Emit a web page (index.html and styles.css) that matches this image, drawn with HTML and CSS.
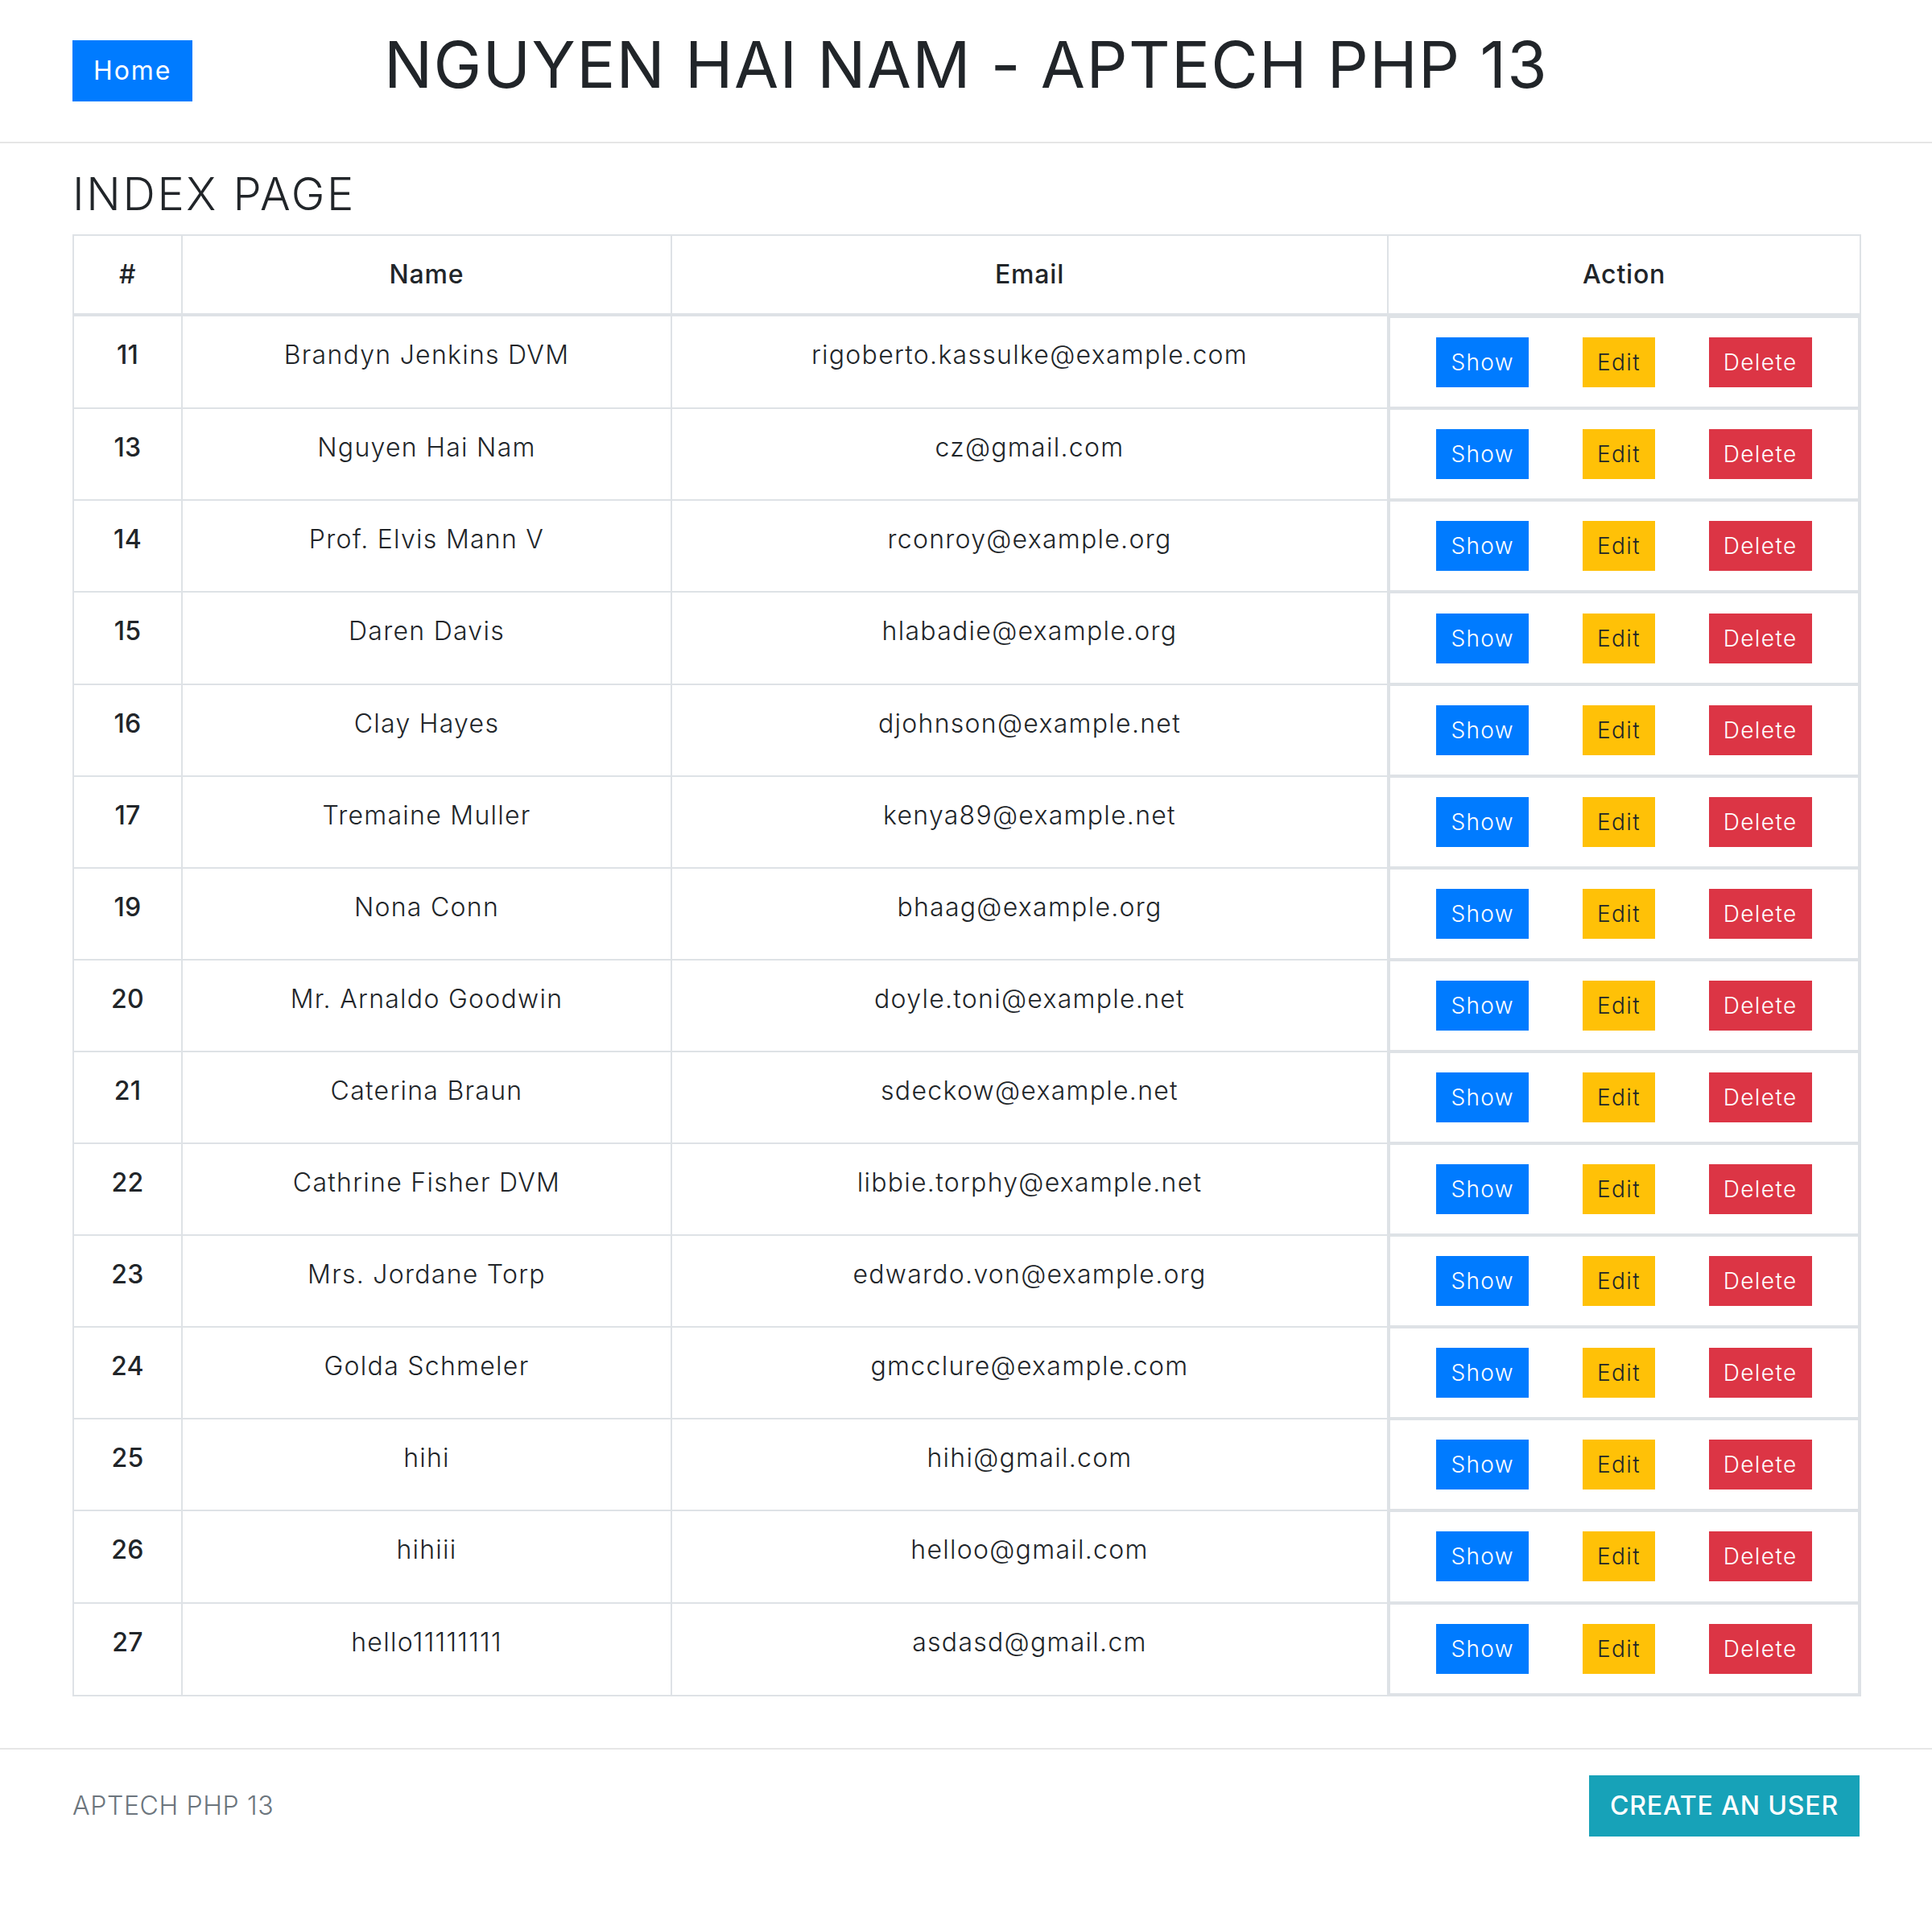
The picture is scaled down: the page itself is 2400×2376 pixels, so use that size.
FILE: index.html
```html
<!DOCTYPE html>
<html lang="en">
<head>
<meta charset="utf-8">
<title>Index Page</title>
<link rel="stylesheet" href="styles.css">
</head>
<body>
<header class="site-header">
  <div class="container header-grid">
    <div class="header-left"><a class="btn btn-primary" href="#">Home</a></div>
    <h1 class="site-title">NGUYEN HAI NAM - APTECH PHP 13</h1>
    <div class="header-right"></div>
  </div>
</header>

<main class="container page">
  <h3 class="page-title">INDEX PAGE</h3>
  <table class="users">
    <colgroup>
      <col class="c-id"><col class="c-name"><col class="c-email"><col class="c-action">
    </colgroup>
    <thead>
      <tr><th>#</th><th>Name</th><th>Email</th><th>Action</th></tr>
    </thead>
    <tbody>
      <tr><th>11</th><td>Brandyn Jenkins DVM</td><td>rigoberto.kassulke@example.com</td><td class="act"><div class="actions"><a class="btn-sm b-show" href="#">Show</a><a class="btn-sm b-edit" href="#">Edit</a><a class="btn-sm b-del" href="#">Delete</a></div></td></tr>
      <tr><th>13</th><td>Nguyen Hai Nam</td><td>cz@gmail.com</td><td class="act"><div class="actions"><a class="btn-sm b-show" href="#">Show</a><a class="btn-sm b-edit" href="#">Edit</a><a class="btn-sm b-del" href="#">Delete</a></div></td></tr>
      <tr><th>14</th><td>Prof. Elvis Mann V</td><td>rconroy@example.org</td><td class="act"><div class="actions"><a class="btn-sm b-show" href="#">Show</a><a class="btn-sm b-edit" href="#">Edit</a><a class="btn-sm b-del" href="#">Delete</a></div></td></tr>
      <tr><th>15</th><td>Daren Davis</td><td>hlabadie@example.org</td><td class="act"><div class="actions"><a class="btn-sm b-show" href="#">Show</a><a class="btn-sm b-edit" href="#">Edit</a><a class="btn-sm b-del" href="#">Delete</a></div></td></tr>
      <tr><th>16</th><td>Clay Hayes</td><td>djohnson@example.net</td><td class="act"><div class="actions"><a class="btn-sm b-show" href="#">Show</a><a class="btn-sm b-edit" href="#">Edit</a><a class="btn-sm b-del" href="#">Delete</a></div></td></tr>
      <tr><th>17</th><td>Tremaine Muller</td><td>kenya89@example.net</td><td class="act"><div class="actions"><a class="btn-sm b-show" href="#">Show</a><a class="btn-sm b-edit" href="#">Edit</a><a class="btn-sm b-del" href="#">Delete</a></div></td></tr>
      <tr><th>19</th><td>Nona Conn</td><td>bhaag@example.org</td><td class="act"><div class="actions"><a class="btn-sm b-show" href="#">Show</a><a class="btn-sm b-edit" href="#">Edit</a><a class="btn-sm b-del" href="#">Delete</a></div></td></tr>
      <tr><th>20</th><td>Mr. Arnaldo Goodwin</td><td>doyle.toni@example.net</td><td class="act"><div class="actions"><a class="btn-sm b-show" href="#">Show</a><a class="btn-sm b-edit" href="#">Edit</a><a class="btn-sm b-del" href="#">Delete</a></div></td></tr>
      <tr><th>21</th><td>Caterina Braun</td><td>sdeckow@example.net</td><td class="act"><div class="actions"><a class="btn-sm b-show" href="#">Show</a><a class="btn-sm b-edit" href="#">Edit</a><a class="btn-sm b-del" href="#">Delete</a></div></td></tr>
      <tr><th>22</th><td>Cathrine Fisher DVM</td><td>libbie.torphy@example.net</td><td class="act"><div class="actions"><a class="btn-sm b-show" href="#">Show</a><a class="btn-sm b-edit" href="#">Edit</a><a class="btn-sm b-del" href="#">Delete</a></div></td></tr>
      <tr><th>23</th><td>Mrs. Jordane Torp</td><td>edwardo.von@example.org</td><td class="act"><div class="actions"><a class="btn-sm b-show" href="#">Show</a><a class="btn-sm b-edit" href="#">Edit</a><a class="btn-sm b-del" href="#">Delete</a></div></td></tr>
      <tr><th>24</th><td>Golda Schmeler</td><td>gmcclure@example.com</td><td class="act"><div class="actions"><a class="btn-sm b-show" href="#">Show</a><a class="btn-sm b-edit" href="#">Edit</a><a class="btn-sm b-del" href="#">Delete</a></div></td></tr>
      <tr><th>25</th><td>hihi</td><td>hihi@gmail.com</td><td class="act"><div class="actions"><a class="btn-sm b-show" href="#">Show</a><a class="btn-sm b-edit" href="#">Edit</a><a class="btn-sm b-del" href="#">Delete</a></div></td></tr>
      <tr><th>26</th><td>hihiii</td><td>helloo@gmail.com</td><td class="act"><div class="actions"><a class="btn-sm b-show" href="#">Show</a><a class="btn-sm b-edit" href="#">Edit</a><a class="btn-sm b-del" href="#">Delete</a></div></td></tr>
      <tr><th>27</th><td>hello11111111</td><td>asdasd@gmail.cm</td><td class="act"><div class="actions"><a class="btn-sm b-show" href="#">Show</a><a class="btn-sm b-edit" href="#">Edit</a><a class="btn-sm b-del" href="#">Delete</a></div></td></tr>
    </tbody>
  </table>
</main>

<footer class="site-footer">
  <div class="container footer-row">
    <span class="footer-text">APTECH PHP 13</span>
    <a class="btn btn-info" href="#">CREATE AN USER</a>
  </div>
</footer>
</body>
</html>
```
FILE: styles.css
```css
* { box-sizing: border-box; }

body {
  margin: 0;
  font-family: "Inter", "Noto Sans", sans-serif;
  font-weight: 300;
  font-size: 32px;
  line-height: 1.5;
  color: #212529;
  background: #fff;
}

a { text-decoration: none; }

.container {
  width: 2220px;
  margin: 0 auto;
}

/* header */
.site-header {
  padding: 32px 0;
  border-bottom: 2px solid #e6e6e6;
}

.header-grid {
  display: grid;
  grid-template-columns: 1fr auto 1fr;
  align-items: center;
}

.site-title {
  margin: 0 0 16px;
  font-size: 80px;
  font-weight: 400;
  line-height: 96px;
  letter-spacing: 0.017em;
  text-align: center;
}

.btn {
  display: inline-block;
  padding: 12px 24px;
  font-size: 32px;
  line-height: 48px;
  border: 2px solid transparent;
  color: #fff;
}

.btn-primary {
  background: #007bff;
  border-color: #007bff;
  font-weight: 400;
  letter-spacing: 0.06em;
}

.btn-info {
  background: #17a2b8;
  border-color: #17a2b8;
  font-weight: 500;
  letter-spacing: 0.027em;
}

/* page */
.page {
  padding-top: 30px;
  padding-bottom: 64px;
}

.page-title {
  margin: 0 0 16px;
  font-size: 56px;
  font-weight: 300;
  line-height: 1.2;
  letter-spacing: 0.047em;
}

.users {
  width: 2220px;
  table-layout: fixed;
  border-collapse: collapse;
  border: 2px solid #dee2e6;
  letter-spacing: 0.04em;
}

.c-id { width: 135px; }
.c-name { width: 608px; }
.c-email { width: 890px; }
.c-action { width: 587px; }

.users th,
.users td {
  padding: 24px;
  border: 2px solid #dee2e6;
  text-align: center;
  vertical-align: top;
}

.users thead th {
  border-bottom-width: 4px;
  vertical-align: bottom;
  font-weight: 450;
  letter-spacing: 0.025em;
}

.users tbody th {
  font-weight: 450;
  letter-spacing: 0.01em;
}

.users td.act {
  padding: 0;
  border-top: none;
  border-bottom: none;
}

.actions {
  display: flex;
  justify-content: space-around;
  align-items: center;
  padding: 24.05px 24px;
  border: 2px solid #dee2e6;
}

.btn-sm {
  display: inline-block;
  padding: 8px 16px;
  font-size: 28px;
  line-height: 42px;
  border: 2px solid transparent;
  letter-spacing: 0.05em;
  font-weight: 300;
}

.b-show { background: #007bff; border-color: #007bff; color: #fff; }
.b-edit { background: #ffc107; border-color: #ffc107; color: #212529; }
.b-del  { background: #dc3545; border-color: #dc3545; color: #fff; }

/* footer */
.site-footer {
  padding: 32px 0;
  border-top: 2px solid #e6e6e6;
}

.footer-row {
  display: flex;
  justify-content: space-between;
  align-items: center;
}

.footer-text {
  color: #6c757d;
  font-weight: 300;
  letter-spacing: 0.02em;
}
```
